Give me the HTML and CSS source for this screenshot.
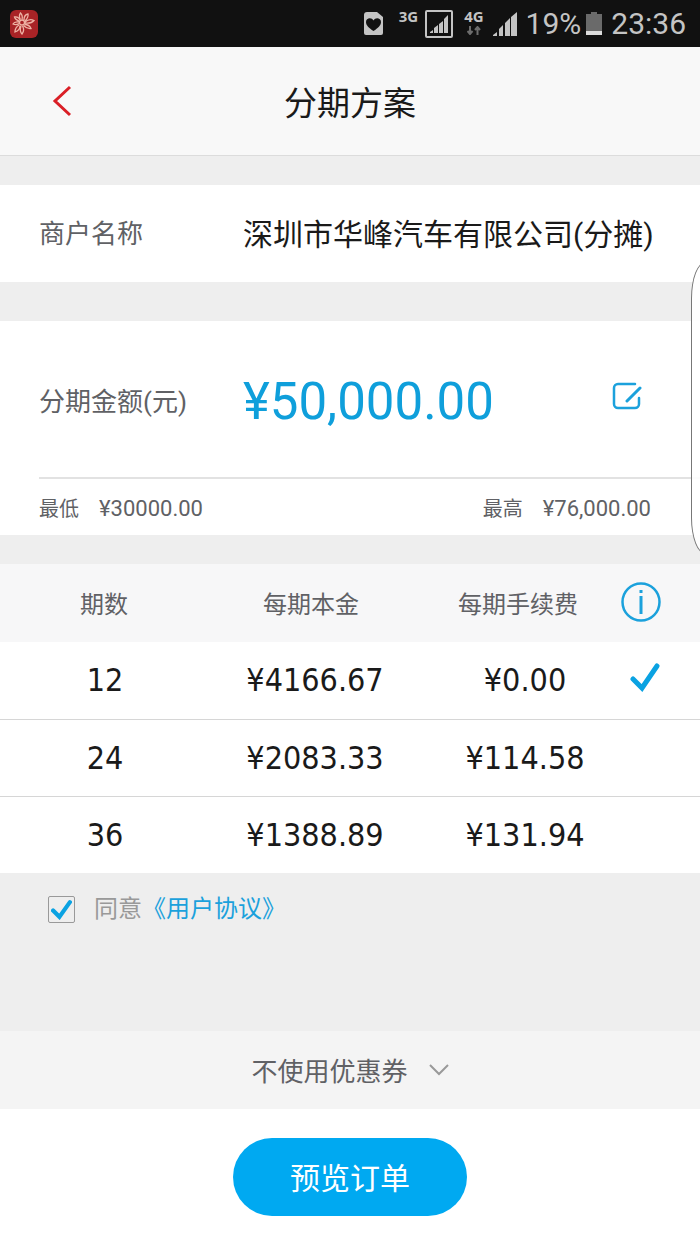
FILE: index.html
```html
<!DOCTYPE html>
<html lang="zh-CN">
<head>
<meta charset="UTF-8">
<meta name="viewport" content="width=device-width, initial-scale=1.0">
<title>分期方案</title>
<link rel="stylesheet" href="styles.css">
</head>
<body>
<div class="status-bar">
  <svg class="app-icon" width="28" height="28" viewBox="0 0 28 28">
    <rect width="28" height="28" rx="6" fill="#a82326"/>
    <g fill="none" stroke="#eeb3a5" stroke-width="1.3">
      <circle cx="12" cy="12.500" r="2.500"/>
      <path d="M10.500 9.500C9 7 9 5 10.500 3c2 2 2 4.500 1.500 6.500M14 10c0-3 1.500-5.500 4-6 .5 2.500-1 5-3 7M15 12c3-2.500 6-3 9-1.500-2 2.500-5.500 3-9 2.500M14.500 14.500c3 0 5.500 1.500 6.500 4-3 .5-5.500-1-7.500-3M12.500 16c1.500 2.500 1.500 5.500-.5 8-2-2-2-5-1-8M10 15.500c0 3-2 5.500-5 6.500 0-3 1.500-5.500 4-7M9 13.500C7 15 5 15 3 14c1-2 3-2.500 6-2M9 11C6.500 10 5 9 4.500 7c2.500-.5 4.500.5 5.500 3"/>
    </g>
  </svg>
  <div class="status-icons">
    <svg class="health" width="19" height="24" viewBox="0 0 19 24">
      <path d="M3 0h10l6 5v16a2 2 0 0 1-2 2H2a2 2 0 0 1-2-2V3a3 3 0 0 1 3-3z" fill="#c4c4c4"/>
      <path d="M9.500 19C5 16 2 13.500 2 10c0-4 5.500-5 7.500-1.500C11.500 5 17 6 17 10c0 3.500-3 6-7.500 9z" fill="#111"/>
    </svg>
    <span class="network">3G</span>
    <svg class="sim" width="28" height="28" viewBox="0 0 28 28">
      <rect x="1" y="1" width="26" height="26" rx="1" fill="none" stroke="#c4c4c4" stroke-width="2"/>
      <path d="M5 23v-1l3-2v3zM9 23v-5l4-3v8zM14 23v-9l4-3v12zM19 23V9l4-4v18z" fill="#c4c4c4"/>
    </svg>
    <span class="network network-data">4G
      <svg width="14" height="9" viewBox="0 0 14 9">
        <path d="M3 0v7M0.500 5L3 8l2.500-3M10.500 9V2M8 4l2.500-3L13 4" fill="none" stroke="#6c6c6c" stroke-width="2"/>
      </svg>
    </span>
    <svg class="signal" width="24" height="24" viewBox="0 0 24 24">
      <path d="M0 24v-1l4-3v4zM6 24v-7l4-4v11zM12 24V11l5-5v18zM18 24V5l6-5v24z" fill="#c4c4c4"/>
    </svg>
    <span class="battery-text">19%</span>
    <svg class="battery" width="16" height="24" viewBox="0 0 16 24">
      <path d="M0 2h5V0h6v2h5v17H0z" fill="#6a6a6a"/>
      <path d="M0 19h16v4H0z" fill="#dcdcdc"/>
    </svg>
    <span class="clock">23:36</span>
  </div>
</div>

<header class="nav-bar">
  <a class="back" href="#" aria-label="返回">
    <svg width="20" height="32" viewBox="0 0 20 32">
      <path d="M18 2L3 16 18 30" fill="none" stroke="#da1f26" stroke-width="3"/>
    </svg>
  </a>
  <h1>分期方案</h1>
</header>

<main>
  <section class="merchant">
    <span class="label">商户名称</span>
    <span class="merchant-name">深圳市华峰汽车有限公司(分摊)</span>
  </section>

  <section class="amount">
    <div class="amount-row">
      <span class="label">分期金额(元)</span>
      <span class="amount-value">¥50,000.00</span>
      <button class="edit" type="button" aria-label="修改金额">
        <svg width="30" height="28" viewBox="0 0 30 28">
          <path d="M23 2H6a4 4 0 0 0-4 4v16a4 4 0 0 0 4 4h17a4 4 0 0 0 4-4v-6" fill="none" stroke="#1ba1dc" stroke-width="2.500" stroke-linecap="round"/>
          <path d="M15 19L28 6" stroke="#1ba1dc" stroke-width="3" stroke-linecap="round"/>
        </svg>
      </button>
    </div>
    <div class="range">
      <p><span>最低</span><span class="money">¥30000.00</span></p>
      <p><span>最高</span><span class="money">¥76,000.00</span></p>
    </div>
  </section>

  <table class="plans">
    <thead>
      <tr>
        <th>期数</th>
        <th>每期本金</th>
        <th>每期手续费</th>
        <th>
          <button class="info" type="button" aria-label="费用说明">
            <svg width="40" height="40" viewBox="0 0 40 40">
              <circle cx="20" cy="20" r="18.500" fill="none" stroke="#1ba1dc" stroke-width="2.500"/>
              <path d="M20 8v3M20 14v18" stroke="#1ba1dc" stroke-width="3"/>
            </svg>
          </button>
        </th>
      </tr>
    </thead>
    <tbody>
      <tr>
        <td><label for="plan-12">12</label></td>
        <td>¥4166.67</td>
        <td>¥0.00</td>
        <td class="pick">
          <input type="radio" name="plan" id="plan-12" checked>
          <svg width="30" height="29" viewBox="0 0 30 29">
            <path d="M3 16l9 9L27 3" fill="none" stroke="#0aa2e2" stroke-width="5" stroke-linecap="round"/>
          </svg>
        </td>
      </tr>
      <tr>
        <td><label for="plan-24">24</label></td>
        <td>¥2083.33</td>
        <td>¥114.58</td>
        <td class="pick">
          <input type="radio" name="plan" id="plan-24">
          <svg width="30" height="29" viewBox="0 0 30 29">
            <path d="M3 16l9 9L27 3" fill="none" stroke="#0aa2e2" stroke-width="5" stroke-linecap="round"/>
          </svg>
        </td>
      </tr>
      <tr>
        <td><label for="plan-36">36</label></td>
        <td>¥1388.89</td>
        <td>¥131.94</td>
        <td class="pick">
          <input type="radio" name="plan" id="plan-36">
          <svg width="30" height="29" viewBox="0 0 30 29">
            <path d="M3 16l9 9L27 3" fill="none" stroke="#0aa2e2" stroke-width="5" stroke-linecap="round"/>
          </svg>
        </td>
      </tr>
    </tbody>
  </table>

  <div class="agree">
    <span class="checkbox">
      <input type="checkbox" id="agree" checked>
      <svg width="21" height="21" viewBox="0 0 20 20">
        <path d="M2 11l6 6L18 3" fill="none" stroke="#0aa2e2" stroke-width="4" stroke-linecap="round"/>
      </svg>
    </span>
    <label for="agree">同意</label>
    <a href="#">《用户协议》</a>
  </div>

  <div class="coupon">
    <div class="coupon-box">
      <select aria-label="优惠券">
        <option>不使用优惠券</option>
      </select>
      <svg width="20" height="12" viewBox="0 0 20 12">
        <path d="M1 1l9 9 9-9" fill="none" stroke="#999" stroke-width="2"/>
      </svg>
    </div>
  </div>
</main>

<footer class="footer">
  <button class="submit" type="button">预览订单</button>
</footer>

<div class="edge-panel"></div>
</body>
</html>
```
FILE: styles.css
```css
* {
  box-sizing: border-box;
}

body {
  position: relative;
  display: flex;
  flex-direction: column;
  min-height: 100vh;
  margin: 0;
  background-color: #eee;
  color: #1a1a1a;
  font-family: Roboto, "Noto Sans CJK SC", sans-serif;
  overflow-x: hidden;
}

h1,
p {
  margin: 0;
  font-weight: normal;
}

svg {
  display: block;
}

button,
select {
  margin: 0;
  padding: 0;
  border: none;
  background: none;
  color: inherit;
  font-family: inherit;
  cursor: pointer;
}

a {
  color: #1ba1dc;
  text-decoration: none;
}

/* status bar */
.status-bar {
  display: flex;
  align-items: center;
  justify-content: space-between;
  height: 47px;
  padding: 0 14px 0 10px;
  background-color: #111;
  color: #c4c4c4;
}

.status-icons {
  display: flex;
  align-items: center;
}

.network {
  align-self: flex-start;
  margin: 0 7px 0 16px;
  font-family: "Noto Sans", sans-serif;
  font-size: 15px;
  font-weight: bold;
  line-height: 20px;
}

.network-data {
  margin: 0 9px 0 11px;
}

.network-data svg {
  margin: 0 auto;
}

.battery-text,
.clock {
  font-size: 30px;
  line-height: 36px;
}

.battery-text {
  margin: 0 5px 0 9px;
}

.clock {
  margin-left: 9px;
}

/* title */
.nav-bar {
  display: grid;
  grid-template-columns: 100px 1fr 100px;
  align-items: center;
  height: 109px;
  border-bottom: 1px solid #dcdcdc;
  background-color: #f8f8f8;
}

.back {
  padding-left: 52px;
}

.nav-bar h1 {
  padding-top: 6px;
  font-size: 33px;
  line-height: 48px;
  text-align: center;
}

/* merchant and amount */
.label {
  flex: 0 0 204px;
  color: #606165;
  font-size: 26px;
}

.merchant {
  display: flex;
  align-items: center;
  height: 97px;
  margin-top: 29px;
  padding: 0 39px 4px;
  background-color: #fff;
}

.merchant-name {
  font-size: 30px;
  white-space: nowrap;
}

.amount {
  margin-top: 39px;
  padding-left: 39px;
  background-color: #fff;
}

.amount-row {
  display: flex;
  align-items: center;
  height: 158px;
  padding-right: 58px;
  border-bottom: 2px solid #e2e2e2;
}

.amount-value {
  flex: 1;
  padding-top: 4px;
  color: #0f9fdb;
  font-size: 51px;
}

.edit {
  padding-bottom: 6px;
}

.range {
  display: flex;
  justify-content: space-between;
  height: 56px;
  padding-right: 49px;
  color: #606165;
  font-size: 20px;
  line-height: 60px;
}

.range p {
  display: flex;
  gap: 20px;
}

.money {
  font-size: 22px;
}

/* plan table */
.plans {
  width: 100%;
  margin-top: 29px;
  border-collapse: collapse;
  table-layout: fixed;
  background-color: #fff;
}

.plans th {
  width: 30%;
  height: 78px;
  padding: 0 8px 2px 0;
  background-color: #f7f7f8;
  color: #606165;
  font-size: 24px;
  font-weight: normal;
}

.plans th:first-child {
  padding-right: 2px;
}

.plans th:nth-child(3) {
  width: 28%;
  padding-right: 0;
}

.plans th:nth-child(4) {
  width: 12%;
  padding-right: 34px;
}

.info {
  vertical-align: middle;
}

.plans td {
  height: 77px;
  padding: 0;
  font-family: "DejaVu Sans Condensed", "Noto Sans", sans-serif;
  font-size: 32px;
  text-align: center;
}

.plans td:nth-child(3) {
  padding-left: 14px;
}

.plans tbody tr + tr td {
  border-top: 1px solid #d6d6d6;
}

.plans .pick {
  padding: 0 0 6px 14px;
}

.pick input {
  display: block;
  appearance: none;
  width: 30px;
  height: 0;
  margin: 0;
}

.pick svg {
  visibility: hidden;
}

.pick input:checked + svg {
  visibility: visible;
}

/* agreement */
.agree {
  display: flex;
  align-items: center;
  height: 72px;
  padding-left: 48px;
  color: #999;
  font-size: 24px;
  line-height: 32px;
}

.checkbox {
  display: grid;
  place-items: center;
  margin-right: 19px;
}

.checkbox input,
.checkbox svg {
  grid-area: 1 / 1;
}

.checkbox input {
  appearance: none;
  width: 27px;
  height: 27px;
  margin: 0;
  border: 1px solid #999;
  border-radius: 2px;
}

.checkbox svg {
  visibility: hidden;
  pointer-events: none;
}

.checkbox input:checked + svg {
  visibility: visible;
}

/* coupon */
.coupon {
  display: flex;
  justify-content: center;
  margin-top: 86px;
  background-color: #f4f4f4;
}

.coupon-box {
  display: grid;
  align-items: center;
}

.coupon-box select,
.coupon-box svg {
  grid-area: 1 / 1;
}

.coupon-box select {
  appearance: none;
  height: 78px;
  padding: 4px 40px 0 0;
  color: #606165;
  font-size: 26px;
}

.coupon-box svg {
  justify-self: end;
  pointer-events: none;
}

/* footer */
.footer {
  display: flex;
  flex: 1;
  justify-content: center;
  align-items: flex-start;
  padding: 29px 0;
  background-color: #fff;
}

.submit {
  width: 234px;
  height: 78px;
  padding-bottom: 2px;
  border-radius: 39px;
  background-color: #00a9f1;
  color: #fff;
  font-size: 30px;
}

/* pull-out panel on the screen edge */
.edge-panel {
  position: absolute;
  top: 262px;
  right: -20px;
  width: 29px;
  height: 292px;
  border: 1px solid #777;
  border-radius: 20px / 50px;
  background-color: rgba(255, 255, 255, 0.9);
}
```
